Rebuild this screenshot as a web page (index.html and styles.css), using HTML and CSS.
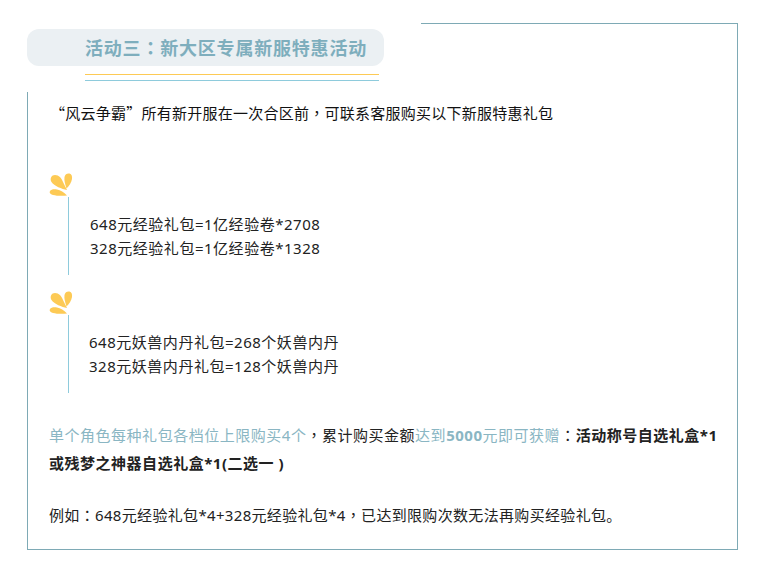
FILE: index.html
```html
<!DOCTYPE html>
<html lang="zh-CN">
<head>
<meta charset="utf-8">
<title>活动三</title>
<link rel="stylesheet" href="styles.css">
</head>
<body>
<main class="frame">
  <div class="top-line"></div>
  <header class="head">
    <h2 class="pill">活动三<span class="punc" lang="zh-TW">：</span>新大区专属新服特惠活动</h2>
    <div class="rule rule-yellow"></div>
    <div class="rule rule-blue"></div>
  </header>
  <section class="body">
    <p class="intro"><span class="cjk">“</span>风云争霸<span class="cjk">”</span>所有新开服在一次合区前<span class="punc" lang="zh-TW">，</span>可联系客服购买以下新服特惠礼包</p>
    <div class="pack pack-first">
      <svg class="petals" viewBox="0 0 24 24"><path d="M18 18C13 17 5 14 2.500 10C0.500 6.500 2.500 3 6 3C10 3 12.500 6 14 10C15.500 13 17 16 18 18Z"/><path d="M17.500 16.500C16 12 15 8 15.500 5C16 2 18.500 1 20.500 1.500C22.800 2.200 23.300 4.500 23 7C22.500 10.500 20 14 17.500 16.500Z"/><path d="M18 23.500C14 24 8 24 4 23C1 22.300 0 20.500 1 19C2.200 17.200 5 17 8 17.500C11.500 18 15 20.500 18 23.500Z"/></svg>
      <div class="pack-text">
        <p>648元经验礼包=1亿经验卷*2708</p>
        <p>328元经验礼包=1亿经验卷*1328</p>
      </div>
    </div>
    <div class="pack">
      <svg class="petals" viewBox="0 0 24 24"><path d="M18 18C13 17 5 14 2.500 10C0.500 6.500 2.500 3 6 3C10 3 12.500 6 14 10C15.500 13 17 16 18 18Z"/><path d="M17.500 16.500C16 12 15 8 15.500 5C16 2 18.500 1 20.500 1.500C22.800 2.200 23.300 4.500 23 7C22.500 10.500 20 14 17.500 16.500Z"/><path d="M18 23.500C14 24 8 24 4 23C1 22.300 0 20.500 1 19C2.200 17.200 5 17 8 17.500C11.500 18 15 20.500 18 23.500Z"/></svg>
      <div class="pack-text pack-text-tight">
        <p>648元妖兽内丹礼包=268个妖兽内丹</p>
        <p>328元妖兽内丹礼包=128个妖兽内丹</p>
      </div>
    </div>
    <p class="notes"><span class="hl">单个角色每种礼包各档位上限购买4个</span><span class="punc" lang="zh-TW">，</span>累计购买金额<span class="hl">达到<b>5000</b>元即可获赠</span><span class="punc" lang="zh-TW">：</span><b>活动称号自选礼盒*1或残梦之神器自选礼盒*1(二选一 )</b></p>
    <p class="example">例如<span class="punc" lang="zh-TW">：</span>648元经验礼包*4+328元经验礼包*4<span class="punc" lang="zh-TW">，</span>已达到限购次数无法再购买经验礼包。</p>
  </section>
</main>
</body>
</html>
```
FILE: styles.css
```css
* { box-sizing: border-box; }
html, body { margin: 0; background: #fff; }
body { padding: 23px 0 0 27px; font-family: "Noto Sans", "Noto Sans CJK SC", sans-serif; font-size: 15px; letter-spacing: 0.3px; color: #222; }
p { margin: 0; }
.cjk { font-family: "Noto Sans CJK SC", sans-serif; }
.punc { font-family: "Noto Sans CJK TC", sans-serif; }
.frame { width: 711px; height: 527px; border-right: 1px solid #7eaab5; border-bottom: 1px solid #7eaab5; display: flex; flex-direction: column; }
.top-line { height: 1px; margin-left: 394px; background: #7eaab5; flex: none; }
.head { height: 68px; flex: none; padding-top: 5px; }
.pill { margin: 0; width: 357px; height: 37px; padding-left: 58px; border-radius: 12px; background: #ebf0f3; color: #7eaebd; font-size: 18px; font-weight: 700; line-height: 37px; letter-spacing: 0.8px; white-space: nowrap; }
.rule { width: 294px; height: 1px; margin-left: 58px; }
.rule-yellow { margin-top: 8px; background: #fdca55; }
.rule-blue { margin-top: 5px; background: #8ecbdc; }
.body { flex: 1; border-left: 1px solid #7eaab5; display: flex; flex-direction: column; }
.intro { margin: 11px 0 0 22px; line-height: 20px; color: #111; white-space: nowrap; letter-spacing: 0.25px; }
.pack { margin-left: 21px; display: flex; flex-direction: column; align-items: flex-start; margin-top: 15px; }
.pack-first { margin-top: 49px; }
.petals { width: 24px; height: 24px; fill: #fdca55; display: block; flex: none; }
.pack-text { margin: 1px 0 0 19px; width: 600px; height: 78px; border-left: 1px solid #8ecbdc; padding: 15px 0 0 21px; line-height: 24px; white-space: nowrap; letter-spacing: 0.52px; }
.pack-text-tight { padding-left: 20px; }
.notes { margin: 28px 16px 0 21px; line-height: 28px; letter-spacing: 0.52px; }
.hl { color: #8ab6c3; }
.example { margin: 24px 0 0 21px; line-height: 28px; white-space: nowrap; letter-spacing: 0.33px; }
```
